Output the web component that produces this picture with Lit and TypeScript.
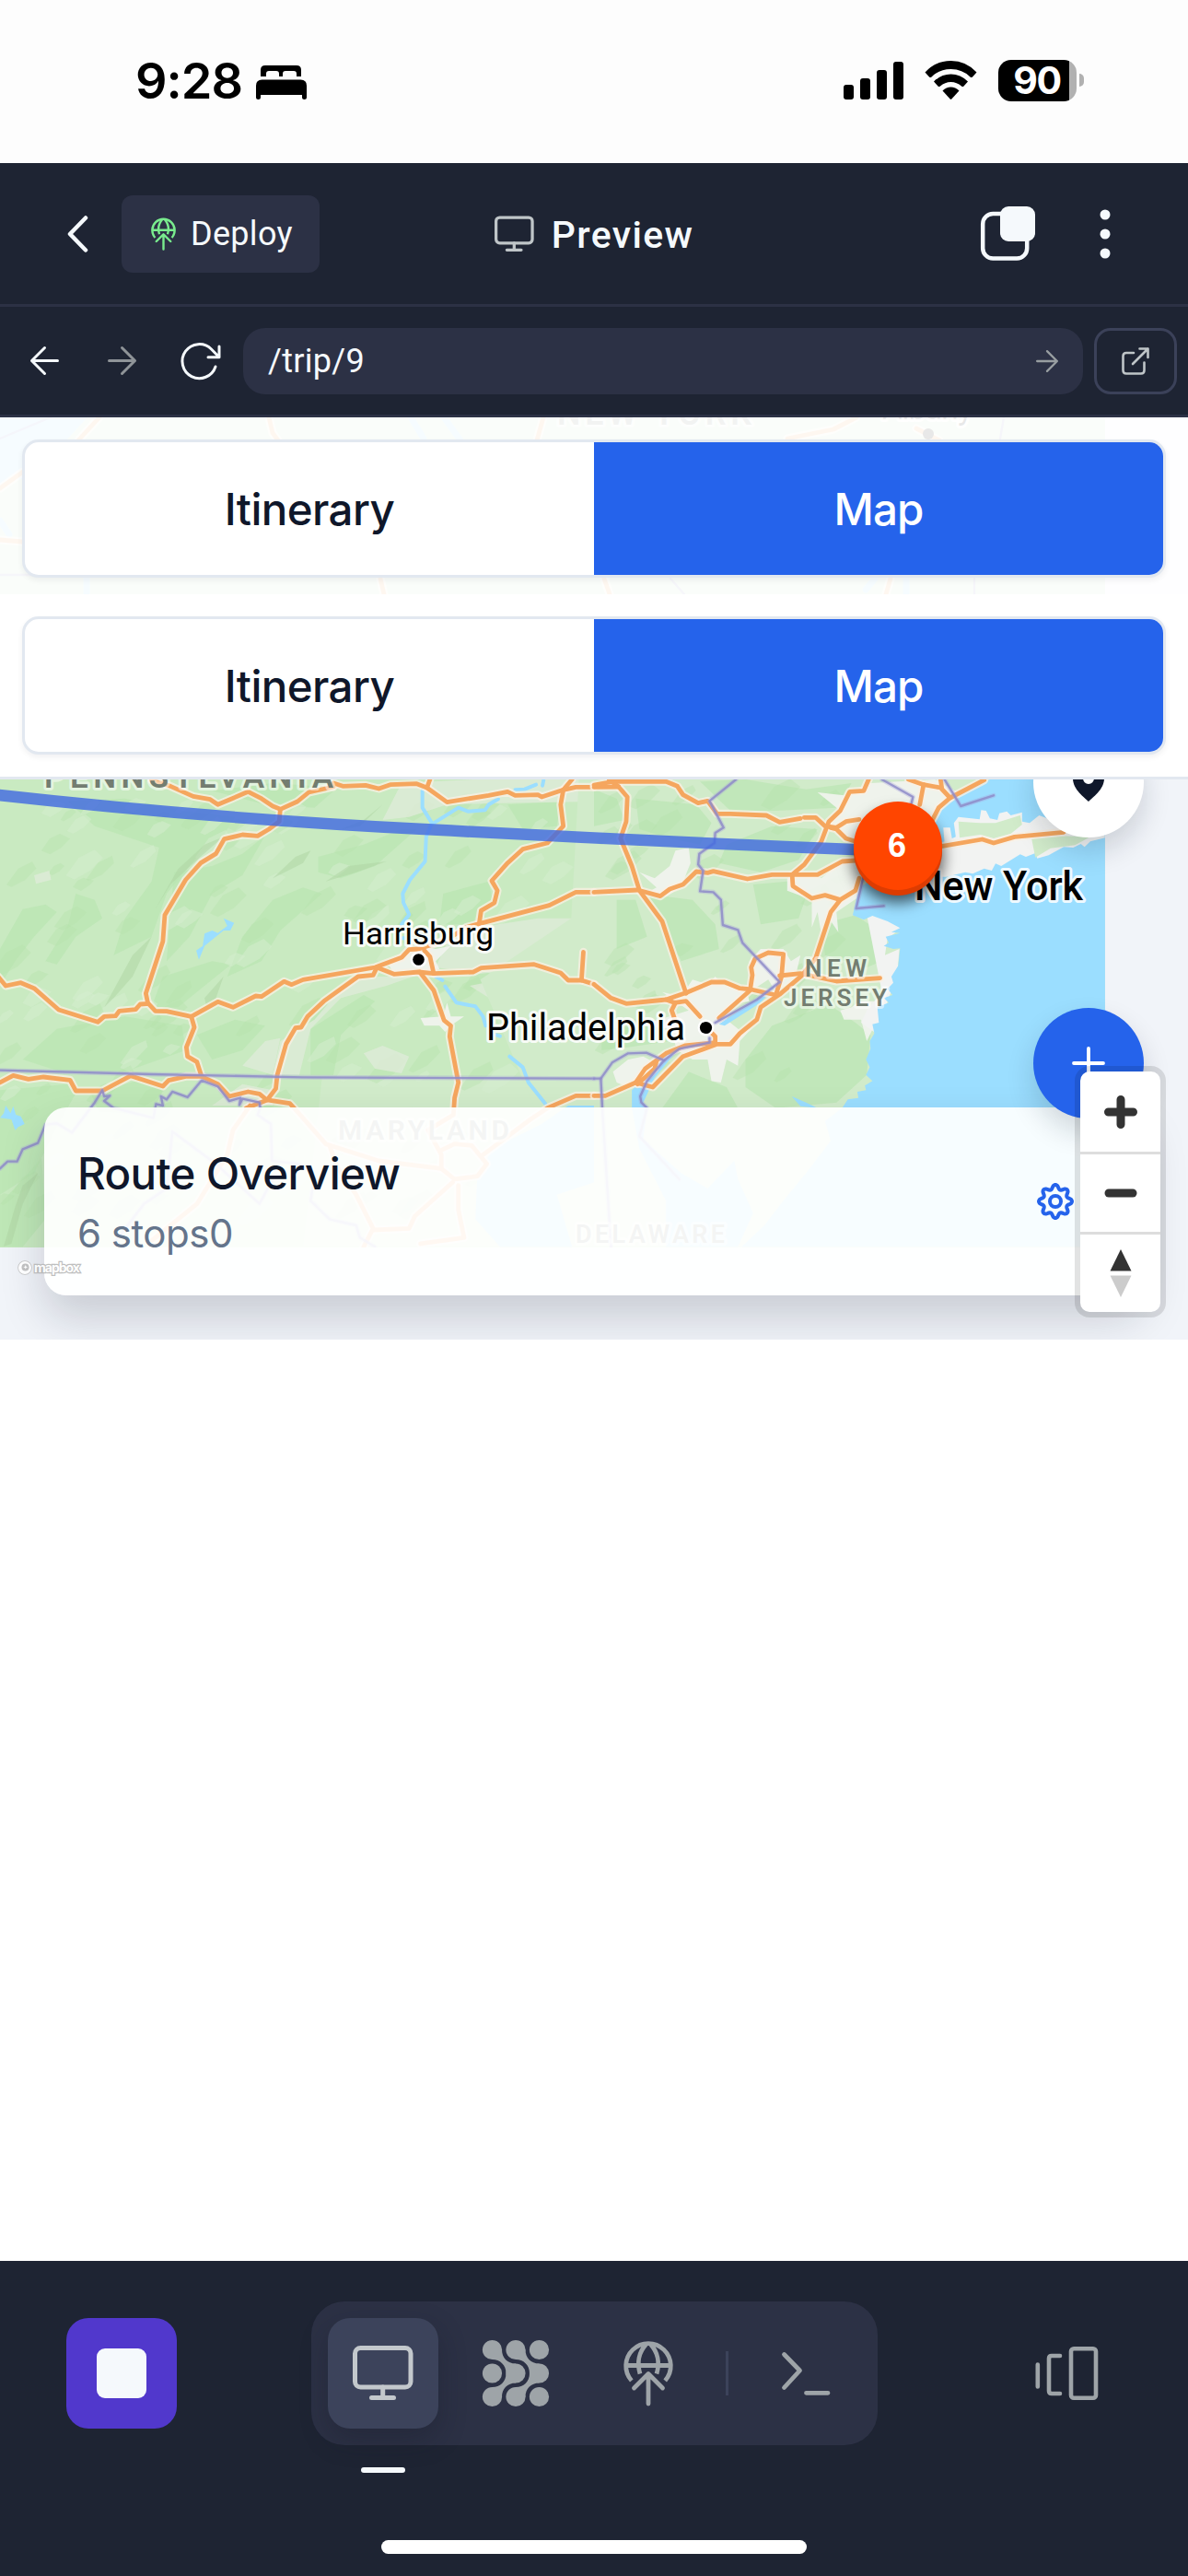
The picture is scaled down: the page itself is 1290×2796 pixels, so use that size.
import { LitElement, html, css, svg } from "lit";
import { customElement, property } from "lit/decorators.js";

/* ---------- map geometry, stored in two half-width panels ---------- */

const WEST_ROADS = [
  "400,50 450,70 510,103 555,113 575,130 655,88 690,110 720,135 740,145 785,120 815,90 880,72",
  "880,60 905,70 965,67 1000,78 1030,65 1100,62 1127,75 1180,122 1290,100 1340,88 1360,100 1420,98 1430,105 1487,82 1510,48",
  "1127,75 1135,48",
  "1487,82 1480,130 1487,200 1445,255 1380,275 1340,320 1298,378 1313,410 1305,450 1270,475 1265,518 1450,458 1520,415 1568,415",
  "1487,82 1520,73 1568,73",
  "740,145 737,185 710,210 680,232 640,228 592,242 570,290 530,320 490,375 435,490 430,575 385,745 390,775",
  "-5,690 15,720 55,710 90,728 155,798 258,838 275,820 305,818 315,802 358,797 370,780 392,778 410,802 440,803 505,820 575,772 615,790 675,753 690,755 750,706 770,716 800,700 990,660 1060,628 1080,602 1105,600 1180,570 1230,530 1265,518",
  "505,820 513,855 492,920 495,950 520,968 532,1015",
  "0,1035 35,1012 75,1024 115,1017 185,1027 200,1062 270,1062 345,1013 430,1047 445,1028 490,1015 532,1015 575,1040 605,1080 655,1065 685,1072 705,1092 765,1103 785,1130 860,1235 1000,1290 1165,1315",
  "650,1118 705,1092 728,1055 732,1010 755,910 780,857 795,855 812,820 855,770 945,690 985,685 995,660 1040,682 1105,675 1145,680 1250,675 1270,662 1410,650 1480,678 1500,702 1535,702 1568,715",
  "1535,702 1540,610",
  "1120,605 1135,625 1145,680",
  "1108,675 1145,735 1172,832 1190,850 1187,885 1210,1035 1200,1085 1197,1140 1130,1190 1165,1270 1165,1315 1200,1350 1260,1340 1285,1300 1245,1240 1200,1235 1165,1255",
  "1275,1270 1330,1220 1400,1155 1445,1118 1520,1078 1568,1078",
  "660,1110 615,1190 600,1270 520,1430 400,1550",
  "870,1240 890,1310 940,1400 985,1510 960,1570",
  "1195,1360 1095,1470 1080,1510 985,1515",
  "1210,1370 1210,1450 1225,1540 1110,1560",
];

const EAST_ROADS = [
  "0,73 65,72",
  "0,66 50,55 190,55 220,70 235,98 275,125 300,118 325,160 360,160 455,165 490,187 545,175",
  "40,48 65,72 88,105 85,185 70,240 100,330 120,410 180,510 243,745",
  "555,172 585,172 610,200 640,205 665,185 700,178",
  "625,205 640,210 665,240 690,250",
  "725,48 712,85 675,88 650,150 620,185 600,250 555,325 523,358 525,395 575,435 610,425 650,440 690,410 700,370",
  "0,415 115,408 175,428 200,405 235,390 270,348 300,352 315,347 405,372 470,358 590,358 655,315 690,312",
  "650,440 625,480 585,630 550,685 490,748 440,790 430,830 385,875 360,910 325,910 235,950 155,1050 110,1035 30,1078 0,1078",
  "0,715 45,760 85,778 190,765 245,742 310,708 345,708 385,728 415,732 480,750",
  "190,765 212,775 243,770 280,820",
  "215,775 205,800 215,835",
  "480,750 495,690 500,617 460,612 425,632 415,660 418,685 412,735 330,825",
  "490,687 545,680 640,705 755,695",
  "300,860 320,885 320,905 240,915 190,940 135,990 110,1035",
  "165,965 160,990 115,1040",
  "920,265 1025,243 1055,255 1110,235 1240,220",
  "830,48 870,65 915,75 940,108 1030,50",
  "870,65 860,130",
  "918,75 915,48",
  "940,108 910,140 885,200",
];

const WEST_BORDERS = [
  "0,995 400,1008 800,1018 1568,1022",
  "0,1315 20,1292 45,1292 60,1252 100,1232 120,1172 150,1168 190,1198 250,1100 270,1060 275,1080 290,1078 275,1095 300,1118 405,1150 412,1105 430,1110 425,1080 440,1090 455,1065 495,1083 532,1028 575,1048 605,1095 635,1085 632,1108 640,1088 685,1100 687,1118 680,1140 715,1170 718,1290 790,1300 830,1340 820,1420 870,1480 940,1500 950,1540 990,1570",
  "300,1560 380,1430 440,1380 455,1195 570,1300 685,1430 720,1350",
];

const EAST_BORDERS = [
  "375,48 305,118 342,205 320,222 318,255 278,290 275,325 288,345 280,412 315,415 335,440 340,522 380,538 392,580 490,708 430,765 320,840",
  "0,1022 18,1022 48,970 90,940 138,938 185,963 225,925 305,905 305,890",
  "18,1022 22,1120 45,1570",
  "185,963 140,1030 122,1080 125,1100 140,1118 120,1210 225,1350",
  "760,48 842,105 835,140",
  "925,48 968,135 1055,100",
  "710,370 692,468 765,460",
];

const RIVERS = [
  "1115,85 1115,140 1140,190 1125,235 1122,315 1082,375 1063,420 1065,450 1080,488 1060,520",
  "1145,190 1210,140 1235,152 1280,148 1290,130 1315,112",
  "1360,82 1385,80 1415,65",
  "1435,50 1432,68",
  "1060,565 1072,565",
  "1150,690 1168,702",
  "1175,722 1205,775 1255,787 1275,820 1282,850",
  "1345,950 1380,985 1395,1035 1440,1105",
  "1310,880 1320,884",
];

const DEEP_WOODS = [
  "180,120 330,110 480,150 620,170 590,230 520,300 440,420 400,560 300,620 330,500 400,380 420,270 250,200",
  "60,470 120,455 150,480 90,560 40,640 0,720 0,600",
  "460,350 560,330 640,290 700,230 640,360 560,420 500,560 440,640 450,480",
  "640,560 720,440 800,400 850,420 740,540 690,640 600,690",
  "430,690 560,640 610,650 540,720 470,790 400,790",
  "840,300 960,260 1060,210 1100,210 990,330 900,370 840,350",
  "560,85 720,60 890,75 830,140 700,130",
  "1170,420 1290,380 1300,440 1260,470 1250,520 1160,520",
  "150,860 330,820 480,850 490,930 330,1000 160,1000 60,960",
  "520,880 620,830 700,850 640,930 560,960",
  "820,860 960,750 990,770 900,880 880,1010 820,1010",
  "1340,130 1480,120 1470,200 1380,210",
  "0,1060 180,1040 200,1070 150,1180 90,1330 0,1400",
  "240,1070 360,1030 430,1060 400,1140 260,1130",
  "200,420 250,440 270,500 200,560 150,650 120,640 180,520",
  "0,1430 60,1350 110,1280 120,1480 60,1570 0,1570",
];

const RIDGES = [
  "590,235 520,310 450,390 410,470 470,340 540,260",
  "350,620 400,560 350,690 300,760 275,790",
  "820,280 780,300 720,370 800,320",
  "1020,315 940,350 860,380 920,330 1000,318",
  "60,1370 100,1330 60,1430 30,1560 10,1568 40,1440",
  "540,760 590,690 570,760 545,790",
  "1010,130 960,180 900,210 950,200",
];

const PALE_LAND = [
  "1060,60 1250,48 1568,48 1568,120 1320,125 1180,130 1080,170 1010,180",
  "720,1010 740,900 830,830 920,700 1000,690 1090,690 1020,720 900,760 820,860 790,1010",
  "1180,580 1260,530 1420,500 1568,500 1568,690 1440,660 1270,680 1150,660",
  "1240,720 1400,680 1568,740 1568,800 1330,790",
  "960,940 1010,915 1080,950 1060,1005 990,990",
  "640,980 700,900 740,890 720,1010",
  "90,360 130,345 135,375 95,388",
  "560,1110 640,1040 720,1060 720,1110",
];

const URBAN = [
  "1020,640 1070,610 1110,590 1150,600 1190,590 1150,640 1160,665 1090,690 1040,680",
  "1110,825 1170,820 1180,775 1190,820 1225,820 1190,850 1175,870 1160,850 1120,850",
  "1475,580 1510,575 1540,510 1535,600 1500,615",
];

const EAST_WOODS = [
  "0,80 60,110 80,180 0,200",
  "110,110 270,130 310,190 280,260 200,240 120,210",
  "280,55 400,48 560,80 680,60 640,140 480,150 360,150",
  "350,260 470,200 590,210 540,310 440,350 330,320",
  "130,420 260,440 320,520 330,600 230,640 180,500",
  "420,390 510,380 560,430 540,500 440,520",
  "600,520 690,490 750,540 760,640 720,660 610,620",
  "400,960 470,850 620,780 690,840 730,880 720,1010 640,1100 480,1118 400,1050",
  "20,860 160,850 200,900 90,920 20,930",
  "250,1000 350,1050 380,1118 180,1118",
  "60,440 110,440 140,560 60,600",
];

const EAST_URBAN = [
  "180,740 230,755 260,700 300,715 320,690 345,720 400,720 410,770 370,780 350,830 390,870 415,860 385,900 380,980 350,960 335,1035 310,1030 300,960 260,960 220,930 200,860 120,850 250,800",
  "120,350 160,370 200,330 215,280 250,270 255,320 245,350 230,400 190,430 135,420 165,400",
  "510,370 560,350 600,370 650,320 700,290 700,430 640,480 645,545 620,500 600,550 590,480 575,530 575,440 510,410",
  "590,90 660,100 730,60 900,48 960,90 900,170 880,240 720,260 660,230 610,200 650,150",
  "410,640 440,600 500,600 520,640 545,620 530,700 480,740 460,700 410,740",
  "650,800 680,790 700,770 750,770 740,850 720,900 705,830 660,830",
  "50,1000 90,960 130,950 160,970 120,1010 90,1050 60,1035",
];

/* Short south-west to north-east facets that give the forest its grain. */
function facets(count: number, seed: number, x0: number, x1: number, y0: number, y1: number): string[] {
  let s = seed;
  const rnd = () => (s = (s * 16807) % 2147483647) / 2147483647;
  return Array.from({ length: count }, () => {
    const x = x0 + rnd() * (x1 - x0);
    const y = y0 + rnd() * (y1 - y0);
    const l = 25 + rnd() * 65;
    const w = 10 + rnd() * 26;
    return [
      [x, y], [x + l * 0.4, y - l * 0.7], [x + l * 0.9, y - l],
      [x + l * 0.8 + w, y - l * 0.7], [x + l * 0.4 + w, y - l * 0.2], [x + w * 0.7, y + w * 0.4],
    ].map(([a, b]) => `${a.toFixed(0)},${b.toFixed(0)}`).join(" ");
  });
}
const WEST_DARK_FACETS = facets(90, 41, -20, 1250, 140, 1500);
const WEST_LIGHT_FACETS = facets(80, 977, -20, 1450, 140, 1500);
const EAST_FACETS = facets(45, 5501, 0, 620, 120, 1080);

const poly = (list: string[], cls: string) =>
  list.map((p) => svg`<polygon class=${cls} points=${p}></polygon>`);
const line = (list: string[], cls: string) =>
  list.map((p) => svg`<polyline class=${cls} points=${p}></polyline>`);

@customElement("trip-map")
export class TripMap extends LitElement {
  static styles = css`
    :host { display: block; width: 1200px; height: 901px; }
    svg { display: block; width: 1200px; height: 901px; }
    polyline, path { fill: none; stroke-linejoin: round; stroke-linecap: round; vector-effect: non-scaling-stroke; }
    .base { fill: #c9eac1; }
    .east-base { fill: #d1ebca; }
    .deep { fill: #b9e5b0; opacity: 0.65; }
    .facet-dark { fill: #b5e2ab; opacity: 0.38; }
    .facet-light { fill: #d6eecf; opacity: 0.5; }
    .ridge { fill: #aed3a2; opacity: 0.5; }
    .pale { fill: #deebd8; opacity: 0.8; }
    .urban { fill: #f2f4f0; opacity: 0.9; }
    .sand { fill: #f2f3f2; }
    .sea { fill: #9bdeff; }
    .river { stroke: #9bdeff; stroke-width: 4; }
    .creek { stroke: #9bdeff; stroke-width: 7; }
    .casing { stroke: #fbf1e4; stroke-width: 9; opacity: 0.75; }
    .road { stroke: #f5a65e; stroke-width: 4.8; }
    .glow { stroke: #a9a4dc; stroke-width: 5; opacity: 0.35; }
    .border { stroke: #8f8cc9; stroke-width: 2.4; opacity: 0.85; }
    .route { stroke: #436ce1; stroke-width: 12.5; opacity: 0.82; stroke-linecap: butt; }
    text { font-family: Roboto, "Liberation Sans", sans-serif; paint-order: stroke; stroke: #fff; stroke-opacity: 0.85; stroke-width: 6px; stroke-linejoin: round; fill: #000; }
    .state { fill: #737d70; stroke-opacity: 0.5; font-weight: 600; }
    .city { font-weight: 400; }
    .major { font-weight: 500; }
  `;

  render() {
    return html`<svg viewBox="0 453 1200 901" preserveAspectRatio="none">
      <rect class="base" x="0" y="453" width="1200" height="901"></rect>
      <g transform="translate(0 830) scale(0.41135 0.33333)">
        <polygon class="east-base" points="850,1020 1568,1020 1568,1570 800,1570"></polygon>
        ${poly(DEEP_WOODS, "deep")}${poly(WEST_LIGHT_FACETS, "facet-light")}${poly(WEST_DARK_FACETS, "facet-dark")}
        ${poly(PALE_LAND, "pale")}${poly(RIDGES, "ridge")}${poly(URBAN, "urban")}
      </g>
      <g transform="translate(645 830) scale(0.41135 0.33333)">
        <polygon class="east-base" points="-40,48 1349,48 1349,1570 0,1570 -300,700 -60,500"></polygon>
        ${poly(EAST_WOODS, "deep")}${poly(EAST_FACETS, "facet-dark")}${poly(EAST_URBAN, "urban")}
        <polygon class="sand" points="720,490 760,485 815,530 775,565 768,620 806,600 800,690 775,770 750,880 705,840 720,800 760,740"></polygon>
        <polygon class="sea" points="1045,48 945,110 905,165 885,240 840,300 700,400 683,490 712,505 735,492 775,510 808,532 785,545 808,548 770,560 778,580 765,590 790,600 808,598 803,655 785,690 790,710 775,730 788,750 765,760 778,775 748,790 752,840 735,845 740,875 728,900 730,925 718,960 728,985 718,1010 735,1030 715,1045 718,1060 695,1065 698,1085 670,1090 655,1118 610,1160 625,1225 560,1330 500,1420 450,1500 390,1570 1349,1570 1349,48"></polygon>
        <polygon class="sea" points="522,1080 560,1100 590,1118 545,1112"></polygon>
        <polygon class="sea" points="490,705 425,765 330,845 345,850 440,775"></polygon>
        <polygon class="sea" points="310,890 220,930 160,1020 130,1100 145,1118 100,1118 100,1060 150,1000 185,940 240,915"></polygon>
        <polygon class="sea" points="140,1118 130,1220 230,1330 300,1380 370,1290 380,1350 420,1460 380,1570 190,1570 190,1420 120,1250 100,1118"></polygon>
        <polygon class="sand" points="895,365 900,330 925,250 922,205 940,205 945,240 955,235 950,190 962,170 1018,178 1022,148 1035,150 1045,175 1065,180 1070,158 1090,152 1100,165 1130,155 1130,185 1150,190 1175,165 1240,195 1345,205 1349,238 1310,250 1295,268 1285,258 1265,270 1240,268 1200,295 1170,305 1165,288 1140,300 1125,292 1075,330 1060,322 1050,345 1030,338 1000,355 980,350 930,365"></polygon>
        <polygon class="east-base" points="962,185 1018,190 1060,190 1125,165 1130,195 1100,225 1055,240 1020,228 965,238"></polygon>
        <polygon class="east-base" points="1155,240 1230,232 1310,235 1270,262 1205,272 1165,302"></polygon>
      </g>
      <g transform="translate(0 830) scale(0.41135 0.33333)">
        <polygon class="sea" points="590,500 618,515 608,540 590,540 560,570 540,590 525,635 518,605 535,590 540,550 560,540 575,548 600,525"></polygon>
        <polygon class="sea" points="15,1110 28,1135 35,1112 42,1140 55,1145 65,1170 48,1180 40,1190 30,1155 0,1150 10,1135"></polygon>
        <polygon class="sea" points="1568,1110 1500,1110 1430,1170 1300,1250 1260,1340 1255,1480 1320,1570 1510,1570 1470,1400 1568,1360"></polygon>
        ${line(RIVERS, "river")}
        ${line(WEST_ROADS, "casing")}${line(WEST_ROADS, "road")}
        ${line(WEST_BORDERS, "glow")}${line(WEST_BORDERS, "border")}
      </g>
      <g transform="translate(645 830) scale(0.41135 0.33333)">
        ${line(EAST_ROADS, "casing")}${line(EAST_ROADS, "road")}
        ${line(EAST_BORDERS, "glow")}${line(EAST_BORDERS, "border")}
      </g>
      <polygon class="sea" points="0,453 95,453 70,480 62,510 0,526"></polygon>
      <path class="creek" d="M446 453 460 476M482 453 500 478M0 565 10 580M94 628V645M984 628V645M940 640 950 628"></path>
      <path class="casing" d="M108 453 85 478M292 453 296 470 302 478M590 453 583 478M930 453 905 466 855 476M0 530 25 512M0 586 24 588M413 628 417 645M656 628 662 645M967 628 962 645M995 465 1020 478"></path>
      <path class="road" d="M108 453 85 478M292 453 296 470 302 478M590 453 583 478M930 453 905 466 855 476M0 530 25 512M0 586 24 588M413 628 417 645M656 628 662 645M967 628 962 645M995 465 1020 478"></path>
      <path class="border" d="M0 476 55 453M0 624H40M1090 453 1086 476M728 628 743 645M1058 628V645"></path>
      <path class="route" d="M-10 862Q220 888 470 900.500Q720 914 975 924"></path>
      <g class="labels">
        <text class="state" x="605" y="461" font-size="36" textLength="211">NEW YORK</text>
        <text class="city" x="958" y="455" font-size="34" textLength="98">Albany</text>
        <text class="state" x="48" y="854.500" font-size="35" textLength="314" lengthAdjust="spacing">PENNSYLVANIA</text>
        <text class="city" x="372" y="1024.500" font-size="34" textLength="164" lengthAdjust="spacingAndGlyphs">Harrisburg</text>
        <text class="city" x="528" y="1129" font-size="40" textLength="216" lengthAdjust="spacingAndGlyphs">Philadelphia</text>
        <text class="major" x="993" y="977" font-size="44" textLength="183" lengthAdjust="spacingAndGlyphs">New York</text>
        <text class="state" x="874" y="1060" font-size="26" textLength="67">NEW</text>
        <text class="state" x="851" y="1092" font-size="26" textLength="112">JERSEY</text>
        <text class="state" x="367" y="1237" font-size="30" textLength="186">MARYLAND</text>
        <text class="state" x="625" y="1349" font-size="27" textLength="162">DELAWARE</text>
      </g>
      <circle cx="1008" cy="471" r="6"></circle>
      <circle cx="454.500" cy="1041.500" r="9" fill="#fff"></circle>
      <circle cx="454.500" cy="1041.500" r="6.300"></circle>
      <circle cx="766.500" cy="1115.500" r="9" fill="#fff"></circle>
      <circle cx="766.500" cy="1115.500" r="6.600"></circle>
    </svg>`;
  }
}

@customElement("view-tabs")
export class ViewTabs extends LitElement {
  static styles = css`
    :host { display: block; }
    .tabs {
      display: grid; grid-template-columns: 1fr 1fr; height: 150px; box-sizing: border-box;
      border: 3px solid #e2e8f0; border-radius: 18px; overflow: hidden; background: #fff;
      box-shadow: 0 3px 6px rgba(15, 23, 42, 0.06);
    }
    .tab {
      display: flex; align-items: center; justify-content: center; padding-top: 2px;
      font: 500 47.5px/60px Inter, sans-serif; letter-spacing: -0.6px; color: #0f172a;
    }
    .on { background: #2563eb; color: #fff; letter-spacing: -0.9px; }
  `;
  render() {
    return html`<div class="tabs"><div class="tab">Itinerary</div><div class="tab on">Map</div></div>`;
  }
}

@customElement("ui-icon")
export class UiIcon extends LitElement {
  @property() name = "";
  static styles = css`
    :host { display: block; flex: none; }
    svg { display: block; width: 100%; height: 100%; overflow: visible; fill: none; stroke: currentColor; stroke-linecap: round; stroke-linejoin: round; }
    .solid { fill: currentColor; stroke: none; }
  `;
  render() {
    switch (this.name) {
      case "bed":
        return html`<svg viewBox="0 0 55 37" class="solid"><path d="M5 12V5Q5 0 10 0H44Q49 0 49 5V12H44V9Q44 6 41 6H32Q29 6 29 9V12H25V9Q25 6 22 6H14Q11 6 11 9V12ZM0 22Q0 15.500 6.500 15.500H48.500Q55 15.500 55 22V35Q55 37 52.500 37T50 35V32H5V35Q5 37 2.500 37T0 35Z"></path></svg>`;
      case "signal":
        return html`<svg viewBox="0 0 65 41" class="solid"><rect x="0" y="25" width="11" height="16" rx="3"></rect><rect x="18" y="18" width="11" height="23" rx="3"></rect><rect x="36" y="9" width="11" height="32" rx="3"></rect><rect x="54" y="0" width="11" height="41" rx="3"></rect></svg>`;
      case "wifi":
        return html`<svg viewBox="0 0 57 42" class="solid"><path d="M0.500 12.500Q12 0 28.500 0T56.500 12.500L52 17.500Q50.500 18.500 49.500 17.500Q41 9 28.500 9T7.500 17.500Q6.500 18.500 5 17.500Z"></path><path d="M10 22.500Q18 14.500 28.500 14.500T47 22.500L42.500 27.500Q41.500 28.500 40 27.500Q35 23 28.500 23T17 27.500Q15.500 28.500 14.500 27.500Z"></path><path d="M19.500 32.500Q23.500 28.500 28.500 28.500T37.500 32.500L29.500 41.300Q28.500 42.300 27.500 41.300Z"></path></svg>`;
      case "chevron":
        return html`<svg viewBox="0 0 22 40" stroke-width="4.500"><path d="M20 2.500 3 20 20 37.500"></path></svg>`;
      case "globe":
        return html`<svg viewBox="0 0 54 70" stroke-width="4.800"><g stroke-linecap="butt"><path d="M8.800 43A24.300 24.300 0 1 1 45.200 43M2.500 26.500H51.500M25 3C16.500 12 14.500 24 18 35.500M29 3C37.500 12 39.500 24 36 35.500"></path></g><path d="M27 36V68M11.500 51 27 35.500 42.500 51"></path></svg>`;
      case "monitor":
        return html`<svg viewBox="0 0 66 60" stroke-width="5"><rect x="2.500" y="2.500" width="60.500" height="42.500" rx="6"></rect><path d="M32.700 45V56.500M20.500 56.500H44.500"></path></svg>`;
      case "copy":
        return html`<svg viewBox="0 0 59 59" stroke-width="4.500"><rect x="2.200" y="8" width="48" height="48.500" rx="11"></rect><rect x="21" y="0" width="38" height="38" rx="9" fill="currentColor" stroke="none"></rect></svg>`;
      case "dots":
        return html`<svg viewBox="0 0 12 54" class="solid"><circle cx="6" cy="6" r="5.500"></circle><circle cx="6" cy="27" r="5.500"></circle><circle cx="6" cy="48" r="5.500"></circle></svg>`;
      case "back":
        return html`<svg viewBox="0 0 31 31" stroke-width="3"><path d="M29.500 15.500H1.500M15.500 1.500 1.500 15.500 15.500 29.500"></path></svg>`;
      case "forward":
        return html`<svg viewBox="0 0 31 31" stroke-width="3"><path d="M1.500 15.500H29.500M15.500 1.500 29.500 15.500 15.500 29.500"></path></svg>`;
      case "reload":
        return html`<svg viewBox="0 0 44 40" stroke-width="3"><path d="M38 26A18.500 18.500 0 1 1 33.500 7L42 15.700M42 4V15.700H30"></path></svg>`;
      case "external":
        return html`<svg viewBox="0 0 30 30" stroke-width="2.600"><path d="M13 6H5Q1.500 6 1.500 9.500V25Q1.500 28.500 5 28.500H21Q24.500 28.500 24.500 25V16.500M12 18 28.500 1.500M19.500 1.500H28.500V11"></path></svg>`;
      case "grid":
        return html`<svg viewBox="0 0 72 72" class="solid">
          ${[10.5, 36, 61.5].map((y) => [10.5, 36, 61.5].map((x) => svg`<circle cx=${x} cy=${y} r="10.600"></circle>`))}
          ${[0, 25.5].map((dx) => svg`<g transform="translate(${dx} 0)"><path d="M10.500 10.500H21C21 19 27 25.500 36 25.500V36H25.500C25.500 27 19 21 10.500 21Z"></path><path d="M10.500 61.500H21C21 53 27 46.500 36 46.500V36H25.500C25.500 45 19 51 10.500 51Z"></path></g>`)}
        </svg>`;
      case "terminal":
        return html`<svg viewBox="0 0 52 47" stroke-width="4.800"><path d="M2.500 2.500 19.500 20 2.500 38.500M26.500 44.300H50"></path></svg>`;
      case "device":
        return html`<svg viewBox="0 0 68 58" stroke-width="4.600"><rect x="39" y="2.300" width="27" height="53.500" rx="3"></rect><path d="M27 10H18Q15 10 15 13V48Q15 51 18 51H27M2.800 19.500V43.500"></path></svg>`;
      case "gear": {
        const pts: string[] = [];
        for (let i = 0; i <= 96; i++) {
          const a = (i / 96) * Math.PI * 2;
          const c = Math.cos(8 * a);
          const r = 15.7 + 2.3 * Math.sign(c) * Math.pow(Math.abs(c), 0.75);
          pts.push(`${(20 + r * Math.sin(a)).toFixed(2)},${(20 - r * Math.cos(a)).toFixed(2)}`);
        }
        return html`<svg viewBox="0 0 40 40" stroke-width="4"><polygon points=${pts.join(" ")}></polygon><circle cx="20" cy="20" r="6"></circle></svg>`;
      }
      case "pin":
        return html`<svg viewBox="0 0 24 24" class="solid"><path fill-rule="evenodd" d="M12 1.500A8.500 8.500 0 0 0 3.500 10C3.500 16 10 20.500 12 22.500C14 20.500 20.500 16 20.500 10A8.500 8.500 0 0 0 12 1.500ZM12 7A3 3 0 1 1 12 13A3 3 0 0 1 12 7Z"></path></svg>`;
      case "add":
        return html`<svg viewBox="0 0 36 36" stroke-width="3.800"><path d="M18 2V34M2 18H34"></path></svg>`;
      case "zoom-in":
        return html`<svg viewBox="0 0 36 36" stroke-width="9"><path d="M18 4.500V31.500M4.500 18H31.500"></path></svg>`;
      case "zoom-out":
        return html`<svg viewBox="0 0 36 36" stroke-width="9"><path d="M5 18H31"></path></svg>`;
      case "compass":
        return html`<svg viewBox="0 0 24 52" class="solid"><path d="M12 0 23.500 23.500H.5Z"></path><path fill="#ccc" d="M12 52 23.500 28.500H.5Z"></path></svg>`;
      default:
        return html``;
    }
  }
}

@customElement("app-root")
export class AppRoot extends LitElement {
  static styles = css`
    :host { display: block; width: 1290px; height: 2796px; background: #fff; overflow: hidden; font-family: Inter, "Liberation Sans", sans-serif; }
    .screen { display: flex; flex-direction: column; height: 2796px; }

    .status { flex: none; height: 177px; box-sizing: border-box; padding: 0 113px 3px 147px; display: flex; align-items: center; background: #fdfdfd; color: #000; }
    .time { font: 600 54px/60px Inter, sans-serif; letter-spacing: -1px; width: 131px; white-space: nowrap; padding-top: 1px; }
    .bed { width: 55px; height: 37px; margin-top: 4px; }
    .status-right { margin-left: auto; display: flex; align-items: center; }
    .signal { width: 65px; height: 41px; margin-right: 23px; }
    .wifi { width: 57px; height: 42px; margin-right: 23px; }
    .battery { width: 85px; height: 45px; border-radius: 14px; background: linear-gradient(90deg, #000 77px, #b1b1b1 77px); color: #fff; font: 700 41px/45px Inter, sans-serif; letter-spacing: -1.5px; text-align: center; box-sizing: border-box; padding-right: 1px; }
    .nub { width: 5px; height: 14px; margin-left: 3px; border-radius: 0 5px 5px 0; background: #b1b1b1; }

    .header { flex: none; height: 156px; box-sizing: border-box; padding: 0 83px 0 73px; display: grid; grid-template-columns: 1fr auto 1fr; align-items: center; background: #1e2433; border-bottom: 3px solid #2c3145; color: #f5f9fc; }
    .left { display: flex; align-items: center; gap: 37px; }
    .chev { width: 22px; height: 40px; }
    .deploy { display: flex; align-items: center; gap: 16px; box-sizing: border-box; width: 215px; height: 84px; padding-left: 32px; border-radius: 12px; background: #2c3145; font: 400 36px/44px Roboto, sans-serif; letter-spacing: 0.3px; }
    .globe { width: 27px; height: 36px; color: #79ec8e; }
    .title { display: flex; align-items: center; gap: 19px; font: 500 41px/46px Roboto, sans-serif; letter-spacing: 1.3px; padding-left: 10px; }
    .title span { padding-top: 2px; }
    .title-icon { width: 43px; height: 40px; color: #bfc5c8; }
    .right { display: flex; align-items: center; justify-content: flex-end; gap: 70px; }
    .copy { width: 59px; height: 59px; }
    .dots { width: 12px; height: 54px; margin-right: 1px; }

    .address { flex: none; height: 120px; box-sizing: border-box; padding: 0 12px 0 33px; display: flex; align-items: center; background: #1e2433; border-bottom: 3px solid #2c3145; color: #f5f9fc; }
    .arrow { width: 31px; height: 31px; }
    .fwd { margin-left: 53px; color: #8f9498; }
    .reload { width: 44px; height: 40px; margin-left: 48px; }
    .url { display: flex; align-items: center; justify-content: space-between; box-sizing: border-box; width: 912px; height: 72px; margin-left: 24px; padding: 0 27px; border-radius: 24px; background: #2c3145; font: 400 36px/44px Roboto, sans-serif; letter-spacing: 0.3px; }
    .go { width: 24px; height: 24px; color: #989ea1; }
    .open { display: flex; align-items: center; justify-content: center; box-sizing: border-box; width: 90px; height: 72px; margin-left: 12px; border: 3px solid #3b4159; border-radius: 18px; color: #bfc5c8; }
    .open-icon { width: 30px; height: 30px; }

    .stage { position: relative; flex: none; height: 1001px; overflow: hidden; background: #f1f4f9; }
    .map { position: absolute; left: 0; top: 0; }
    .float { position: absolute; }
    .round { left: 1122px; width: 120px; height: 120px; border-radius: 50%; display: flex; align-items: center; justify-content: center; box-shadow: 0 15px 30px rgba(15, 23, 42, 0.16); }
    .locate { top: 336px; background: #fff; color: #0f172a; }
    .add { top: 641px; background: #2563eb; color: #fff; }
    .pin-icon { width: 48px; height: 48px; }
    .add-icon { width: 36px; height: 36px; margin-top: -1px; }
    .marker { left: 927px; top: 417px; width: 96px; height: 96px; border-radius: 50%; background: #ff4500; color: #fff; text-align: center; font: 700 36px/95px "Liberation Sans", sans-serif; text-indent: -2px; box-shadow: 0 6px 0 #dc3c02, 0 12px 15px 2px rgba(0, 0, 0, 0.6); }
    .card { left: 48px; top: 749px; width: 1194px; height: 204px; box-sizing: border-box; padding: 0 76px 0 36px; display: flex; align-items: center; justify-content: space-between; border-radius: 24px; background: rgba(255, 255, 255, 0.92); box-shadow: 0 24px 48px rgba(15, 23, 42, 0.18); }
    .card-text { padding-top: 4px; }
    .card-title { font: 500 47.5px/66px Inter, sans-serif; letter-spacing: -0.65px; color: #0f172a; }
    .card-sub { font: 400 42px/64px Inter, sans-serif; letter-spacing: -0.5px; color: #64748b; }
    .gear { width: 40px; height: 40px; color: #2563eb; margin-top: -1px; }
    .logo { left: 19px; top: 914px; display: flex; align-items: center; gap: 2px; height: 18px; font: 700 14px/18px Inter, sans-serif; letter-spacing: -1px; color: #fff; -webkit-text-stroke: 2.4px #b4b4b4; paint-order: stroke fill; opacity: 0.85; }
    .logo svg { width: 16px; height: 16px; }
    .zoom { left: 1167px; top: 704px; width: 99px; height: 273px; box-sizing: border-box; border: 6px solid rgba(0, 0, 0, 0.11); border-radius: 16px; background: #fff; background-clip: padding-box; display: grid; grid-template-rows: 90px 87px 84px; }
    .zoom-btn { display: flex; align-items: center; justify-content: center; color: #333; border-bottom: 3px solid #ddd; }
    .zoom-btn:last-child { border-bottom: 0; }
    .zoom-icon { width: 36px; height: 36px; }
    .compass { width: 24px; height: 52px; }
    .bar { position: relative; padding: 24px 24px 18px; background: rgba(255, 255, 255, 0.91); }
    .bar-solid { padding-bottom: 24px; background: #fff; border-bottom: 3px solid #e2e8f0; }

    .blank { flex: 1; background: #fff; }

    .dock { position: relative; flex: none; height: 342px; box-sizing: border-box; padding: 44px 98px 0 72px; display: flex; align-items: flex-start; background: #1e2433; color: #9ea4a8; }
    .stop { width: 120px; height: 120px; margin-top: 18px; border-radius: 24px; background: #5138cc; display: flex; align-items: center; justify-content: center; }
    .stop-square { width: 54px; height: 54px; border-radius: 9px; background: #f5f9fc; }
    .pill { display: flex; align-items: center; gap: 24px; margin-left: 146px; padding: 18px; border-radius: 36px; background: #2c3145; }
    .tool { width: 120px; height: 120px; border-radius: 24px; display: flex; align-items: center; justify-content: center; }
    .active { position: relative; background: #3c435b; color: #c3c8cc; box-shadow: 0 12px 30px rgba(20, 24, 38, 0.3); }
    .active::after { content: ""; position: absolute; left: 36px; top: 162px; width: 48px; height: 6px; border-radius: 3px; background: #f5f9fc; }
    .i-monitor { width: 66px; height: 60px; }
    .i-grid { width: 72px; height: 72px; }
    .i-globe { width: 54px; height: 70px; }
    .i-terminal { width: 52px; height: 47px; margin-top: 1px; }
    .rule { width: 3px; height: 48px; background: #3c435b; }
    .i-device { width: 68px; height: 58px; margin: 49px 0 0 auto; }
    .home { position: absolute; left: 414px; top: 303px; width: 462px; height: 15px; border-radius: 8px; background: #fff; }
  `;

  render() {
    return html`<div class="screen">
      <div class="status">
        <div class="time">9:28</div>
        <ui-icon class="bed" name="bed"></ui-icon>
        <div class="status-right">
          <ui-icon class="signal" name="signal"></ui-icon>
          <ui-icon class="wifi" name="wifi"></ui-icon>
          <div class="battery">90</div>
          <div class="nub"></div>
        </div>
      </div>

      <div class="header">
        <div class="left">
          <ui-icon class="chev" name="chevron"></ui-icon>
          <div class="deploy"><ui-icon class="globe" name="globe"></ui-icon>Deploy</div>
        </div>
        <div class="title"><ui-icon class="title-icon" name="monitor"></ui-icon><span>Preview</span></div>
        <div class="right">
          <ui-icon class="copy" name="copy"></ui-icon>
          <ui-icon class="dots" name="dots"></ui-icon>
        </div>
      </div>

      <div class="address">
        <ui-icon class="arrow" name="back"></ui-icon>
        <ui-icon class="arrow fwd" name="forward"></ui-icon>
        <ui-icon class="reload" name="reload"></ui-icon>
        <div class="url"><span>/trip/9</span><ui-icon class="go" name="forward"></ui-icon></div>
        <div class="open"><ui-icon class="open-icon" name="external"></ui-icon></div>
      </div>

      <div class="stage">
        <trip-map class="map"></trip-map>
        <div class="float marker">6</div>
        <div class="float round locate"><ui-icon class="pin-icon" name="pin"></ui-icon></div>
        <div class="float card">
          <div class="card-text">
            <div class="card-title">Route Overview</div>
            <div class="card-sub">6 stops0</div>
          </div>
          <ui-icon class="gear" name="gear"></ui-icon>
        </div>
        <div class="float round add"><ui-icon class="add-icon" name="add"></ui-icon></div>
        <div class="float logo">
          <svg viewBox="0 0 16 16"><circle cx="8" cy="8" r="7" fill="#fff" stroke="#b8b8b8" stroke-width="1.500"></circle><circle cx="8.500" cy="7.500" r="4" fill="#b8b8b8"></circle><path d="M8.700 5 9.500 6.700 11 7.300 9.500 8 8.700 9.600 8 8 6.300 7.300 8 6.700Z" fill="#fff"></path></svg>mapbox
        </div>
        <div class="float zoom">
          <div class="zoom-btn"><ui-icon class="zoom-icon" name="zoom-in"></ui-icon></div>
          <div class="zoom-btn"><ui-icon class="zoom-icon" name="zoom-out"></ui-icon></div>
          <div class="zoom-btn"><ui-icon class="compass" name="compass"></ui-icon></div>
        </div>
        <div class="bar"><view-tabs></view-tabs></div>
        <div class="bar bar-solid"><view-tabs></view-tabs></div>
      </div>

      <div class="blank"></div>

      <div class="dock">
        <div class="stop"><div class="stop-square"></div></div>
        <div class="pill">
          <div class="tool active"><ui-icon class="i-monitor" name="monitor"></ui-icon></div>
          <div class="tool"><ui-icon class="i-grid" name="grid"></ui-icon></div>
          <div class="tool"><ui-icon class="i-globe" name="globe"></ui-icon></div>
          <div class="rule"></div>
          <div class="tool"><ui-icon class="i-terminal" name="terminal"></ui-icon></div>
        </div>
        <ui-icon class="i-device" name="device"></ui-icon>
        <div class="home"></div>
      </div>
    </div>`;
  }
}
